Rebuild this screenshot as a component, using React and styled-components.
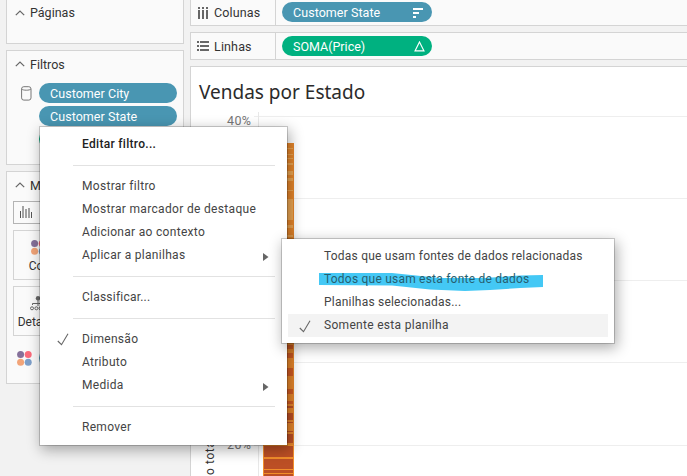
import React from "react";
import styled, { createGlobalStyle, css } from "styled-components";

const Global = createGlobalStyle`
  * { box-sizing: border-box; }
  html, body { margin: 0; overflow: hidden; background: #f2f2f2; }
  body { font: 12px/23px Roboto, "Liberation Sans", sans-serif; color: #333; }
`;

const Workspace = styled.div`
  position: relative;
  width: 687px;
  height: 476px;
  overflow: hidden;
  display: flex;
  background: #f2f2f2;
`;

const Sidebar = styled.aside`
  width: 178px;
  margin-left: 6px;
  flex: none;
  display: flex;
  flex-direction: column;
  gap: 6px;
`;

const Card = styled.section`
  height: ${(p) => p.$h}px;
  flex: none;
  border: 1px solid #d4d4d4;
  border-top-width: ${(p) => (p.$cut ? 0 : 1)}px;
  background: #fafafa;
  overflow: hidden;
`;

const CardHeader = styled.h2`
  margin: 0;
  height: ${(p) => p.$h || 26}px;
  padding-left: 8px;
  display: flex;
  align-items: center;
  gap: 5px;
  font-size: 12.5px;
  font-weight: 400;
`;

const FilterGrid = styled.div`
  display: grid;
  grid-template-columns: 24px 138px;
  row-gap: 3px;
  padding: 6px 0 0 8px;
`;

const Pill = styled.div`
  grid-column: 2;
  flex: none;
  width: ${(p) => p.$w || 138}px;
  height: 20px;
  border-radius: 10px;
  padding: 1px 7px 0 11px;
  display: flex;
  align-items: center;
  justify-content: space-between;
  background: ${(p) => (p.$green ? "#00b180" : "#4996b2")};
  color: #fff;
  font-size: 12.5px;
  letter-spacing: ${(p) => p.$ls || 0}px;
  white-space: nowrap;
`;

const CylinderCell = styled.div`
  display: flex;
  align-items: center;
  padding-left: 6px;
`;

const MarkSelect = styled.div`
  width: 164px;
  height: 23px;
  margin: 3px 6px 6px;
  border: 1px solid #b4b4b4;
  display: flex;
  align-items: center;
  padding-left: 6px;
`;

const MarkGrid = styled.div`
  display: grid;
  grid-template-columns: repeat(3, 50px);
  gap: 6px 7px;
  padding-left: 6px;
`;

const MarkButton = styled.div`
  height: 50px;
  border: 1px solid #d4d4d4;
  display: flex;
  flex-direction: column;
  align-items: center;
  padding-top: 9px;
  font-size: 12px;
  line-height: 22px;
`;

const MarkRow = styled.div`
  display: flex;
  align-items: center;
  gap: 7px;
  padding: 12px 0 0 10px;
`;

const Main = styled.main`
  flex: 1;
  margin-left: 6px;
  display: flex;
  flex-direction: column;
  gap: 6px;
`;

const Shelf = styled.div`
  height: ${(p) => p.$h}px;
  flex: none;
  display: flex;
  border: 1px solid #d4d4d4;
  border-right: 0;
  border-top-width: ${(p) => (p.$cut ? 0 : 1)}px;
  background: #fafafa;
`;

const ShelfLabel = styled.div`
  width: 85px;
  padding-left: 6px;
  border-right: 1px solid #d4d4d4;
  display: flex;
  align-items: center;
  gap: 5px;
  font-size: 12.5px;
  letter-spacing: 0.15px;
`;

const ShelfBody = styled.div`
  padding: ${(p) => p.$top}px 0 0 6px;
`;

const Sheet = styled.section`
  flex: 1;
  border: 1px solid #d4d4d4;
  border-right: 0;
  border-bottom: 0;
  background: #fff;
`;

const SheetTitle = styled.h1`
  margin: 0;
  height: 44px;
  padding: 11px 0 0 8px;
  font: 400 19px/28px "Noto Sans", sans-serif;
  color: #2b2b2b;
`;

const Plot = styled.svg`
  display: block;
`;

const AxisText = styled.text`
  font: ${(p) => p.$size || 12.5}px Roboto, sans-serif;
  letter-spacing: ${(p) => p.$ls || 0}px;
  fill: ${(p) => p.$fill || "#777"};
`;

const popup = css`
  position: absolute;
  background: #fff;
  background-clip: padding-box;
  border: 1px solid rgba(0, 0, 0, 0.18);
  box-shadow: 2px 4px 13px rgba(0, 0, 0, 0.32);
`;

const Menu = styled.div`
  ${popup}
  left: 39px;
  top: 126px;
  width: 249px;
  height: 320px;
  padding-top: 5px;
`;

const Submenu = styled.div`
  ${popup}
  left: 281px;
  top: 238px;
  width: 334px;
  height: 106px;
  padding: 6px;
`;

const itemColor = (p) => {
  if (p.$strong) return "#222";
  return p.$marked ? "#275f70" : "#444";
};

const Item = styled.div`
  position: relative;
  height: 23px;
  display: grid;
  grid-template-columns: ${(p) => (p.$sub ? 36 : 42)}px 1fr 24px;
  align-items: center;
  color: ${itemColor};
  font-size: 12px;
  font-weight: ${(p) => (p.$strong ? 500 : 400)};
  letter-spacing: ${(p) => p.$ls ?? 0.3}px;
  background: ${(p) => (p.$active ? "#f3f3f3" : "transparent")};
  white-space: nowrap;
`;

const MenuLabel = styled.span`
  padding-top: 2px;
  line-height: 21px;
`;

const CheckCell = styled.span`
  display: flex;
  padding: 2px 0 0 ${(p) => (p.$sub ? 11 : 17)}px;
`;

const ArrowCell = styled.span`
  display: flex;
  padding-top: 4px;
`;

const Rule = styled.div`
  height: 19px;
  padding: 10px 12px 0 33px;
  &::before {
    content: "";
    display: block;
    height: 1px;
    background: #e2e2e2;
  }
`;

const Marker = styled.svg`
  position: absolute;
  left: 37px;
  top: 33px;
`;

const Chevron = () => (
  <svg width="10" height="6" viewBox="0 0 10 6">
    <path d="M.8 5.2 5 1l4.2 4.2" fill="none" stroke="#666" strokeWidth="1.2" />
  </svg>
);

const Check = () => (
  <svg width="12" height="13" viewBox="0 0 12 13">
    <path d="M.8 8 4.5 11.7 11 .8" fill="none" stroke="#666" strokeWidth="1.1" />
  </svg>
);

const Arrow = () => (
  <ArrowCell>
    <svg width="6" height="8" viewBox="0 0 6 8">
      <path d="M0 0 5.5 4 0 8Z" fill="#666" />
    </svg>
  </ArrowCell>
);

const Cylinder = () => (
  <svg width="11" height="15" viewBox="0 0 11 15" fill="none" stroke="#777">
    <rect x=".6" y=".7" width="9.4" height="13.4" rx="2.2" />
    <path d="M.7 3c1 1.6 8.2 1.6 9.2 0" />
  </svg>
);

const Dots = () => (
  <svg width="15" height="15" viewBox="0 0 15 15">
    <circle cx="3.6" cy="3.6" r="3.5" fill="#85709a" />
    <circle cx="11.2" cy="3.6" r="3.5" fill="#fb6b7b" />
    <circle cx="3.6" cy="11.2" r="3.5" fill="#f2a478" />
    <circle cx="11.2" cy="11.2" r="3.5" fill="#7d9fc9" />
  </svg>
);

const BarsIcon = () => (
  <svg width="13" height="13" viewBox="0 0 13 13">
    <path d="M0 5h1v7H0zM11 6h1v6h-1z" fill="#555" />
    <path d="M2 0h2v12H2zM5 3h2v9H5zM8 2h2v10H8z" fill="#a3a3a3" />
  </svg>
);

const DetailIcon = () => (
  <svg width="16" height="15" viewBox="0 0 16 15" fill="none" stroke="#666">
    <circle cx="8" cy="2.3" r="2.2" fill="#666" stroke="none" />
    <path d="M8 4v6M2.5 9V7.5h11V9" />
    <circle cx="2" cy="12.3" r="1.5" />
    <circle cx="6.4" cy="12.3" r="1.5" />
    <circle cx="10.5" cy="12.3" r="1.5" />
  </svg>
);

const ColumnsIcon = () => (
  <svg width="12" height="12" viewBox="0 0 12 12" fill="#666">
    <path d="M1 0h2v2H1zM5 0h2v2H5zM9 0h2v2H9zM1 3h2v9H1zM5 3h2v9H5zM9 3h2v9H9z" />
  </svg>
);

const RowsIcon = () => (
  <svg width="12" height="10" viewBox="0 0 12 10" fill="#666">
    <path d="M0 0h2v2H0zM0 4h2v2H0zM0 8h2v2H0zM3 0h9v2H3zM3 4h9v2H3zM3 8h9v2H3z" />
  </svg>
);

const SortIcon = () => (
  <svg width="12" height="10" viewBox="0 0 12 10" fill="#fff">
    <path d="M0 0h10v2H0zM0 4h6v2H0zM0 8h3v2H0z" />
  </svg>
);

const Delta = () => (
  <svg width="12" height="12" viewBox="0 0 12 12">
    <path d="M6.5 .9 11 9.9H2Z" fill="none" stroke="#fff" strokeWidth="1.1" />
  </svg>
);

const bands = [
  { fill: "#eba552", rows: [[148, 1], [154, 1], [158, 1], [163, 2], [171, 4], [178, 3], [190, 1], [199, 21], [225, 3], [235, 2]] },
  { fill: "#cf5a22", rows: [[345, 4], [353, 5], [368, 8], [389, 5], [401, 3]] },
  { fill: "#bc4f25", rows: [[406, 2], [413, 7], [422, 1], [431, 1], [434, 9], [446, 11], [459, 10], [470, 3], [474, 2]] },
];

const Chart = () => (
  <Plot width="496" height="365" viewBox="191 111 496 365">
    {[116, 198, 280, 362, 445].map((y) => (
      <rect key={y} x={y === 116 || y === 445 ? 254 : 258} y={y} width="433" height="1" fill="#eeeeee" />
    ))}
    <rect x="258" y="112" width="1" height="364" fill="#e8e8e8" />
    <rect x="263" y="143" width="31" height="302" fill="#e5862b" />
    <rect x="263" y="445" width="31" height="31" fill="#f28e2b" />
    {bands.map(({ fill, rows }) =>
      rows.map(([y, h]) => <rect key={y} x="264" y={y} width="29" height={h} fill={fill} />)
    )}
    <AxisText x="227" y="125" $ls={0.4}>40%</AxisText>
    <AxisText x="227" y="449" $ls={0.4}>20%</AxisText>
    <AxisText transform="translate(214 475) rotate(-90)" $fill="#333" $size={12} $ls={0.6}>o total</AxisText>
  </Plot>
);

export default function App() {
  return (
    <>
      <Global />
      <Workspace>
        <Sidebar>
          <Card $h={44} $cut>
            <CardHeader $h={25}><Chevron />Páginas</CardHeader>
          </Card>
          <Card $h={115}>
            <CardHeader><Chevron />Filtros</CardHeader>
            <FilterGrid>
              <CylinderCell><Cylinder /></CylinderCell>
              <Pill $ls={0.05}>Customer City</Pill>
              <Pill $ls={0.05}>Customer State</Pill>
              <Pill $green />
            </FilterGrid>
          </Card>
          <Card $h={213}>
            <CardHeader><Chevron />Marcas</CardHeader>
            <MarkSelect><BarsIcon /></MarkSelect>
            <MarkGrid>
              <MarkButton><Dots />Cor</MarkButton>
              <MarkButton />
              <MarkButton />
              <MarkButton><DetailIcon />Detalhe</MarkButton>
              <MarkButton />
            </MarkGrid>
            <MarkRow><Dots /><Pill /></MarkRow>
          </Card>
        </Sidebar>
        <Main>
          <Shelf $h={26} $cut>
            <ShelfLabel><ColumnsIcon />Colunas</ShelfLabel>
            <ShelfBody $top={2}><Pill $w={150} $ls={0.05}>Customer State<SortIcon /></Pill></ShelfBody>
          </Shelf>
          <Shelf $h={28}>
            <ShelfLabel><RowsIcon />Linhas</ShelfLabel>
            <ShelfBody $top={3}><Pill $w={150} $green>SOMA(Price)<Delta /></Pill></ShelfBody>
          </Shelf>
          <Sheet>
            <SheetTitle>Vendas por Estado</SheetTitle>
            <Chart />
          </Sheet>
        </Main>
        <Menu>
          <Item $strong $ls={0.3}><span /><MenuLabel>Editar filtro...</MenuLabel></Item>
          <Rule />
          <Item><span /><MenuLabel>Mostrar filtro</MenuLabel></Item>
          <Item $ls={0.33}><span /><MenuLabel>Mostrar marcador de destaque</MenuLabel></Item>
          <Item><span /><MenuLabel>Adicionar ao contexto</MenuLabel></Item>
          <Item><span /><MenuLabel>Aplicar a planilhas</MenuLabel><Arrow /></Item>
          <Rule />
          <Item $ls={0.22}><span /><MenuLabel>Classificar...</MenuLabel></Item>
          <Rule />
          <Item><CheckCell><Check /></CheckCell><MenuLabel>Dimensão</MenuLabel></Item>
          <Item><span /><MenuLabel>Atributo</MenuLabel></Item>
          <Item><span /><MenuLabel>Medida</MenuLabel><Arrow /></Item>
          <Rule />
          <Item><span /><MenuLabel>Remover</MenuLabel></Item>
        </Menu>
        <Submenu>
          <Marker width="224" height="20" viewBox="319 272 224 20">
            <path d="M319 273H392L440 278 485 278 520 275.5 543 275V287L520 288 490 290 465 291 430 289.5 392 285.5 319 285Z" fill="#44c8f5" />
          </Marker>
          <Item $sub $ls={0.22}><span /><span>Todas que usam fontes de dados relacionadas</span></Item>
          <Item $sub $marked $ls={0.22}><span /><span>Todos que usam esta fonte de dados</span></Item>
          <Item $sub $ls={0.22}><span /><span>Planilhas selecionadas...</span></Item>
          <Item $sub $active><CheckCell $sub><Check /></CheckCell><span>Somente esta planilha</span></Item>
        </Submenu>
      </Workspace>
    </>
  );
}
